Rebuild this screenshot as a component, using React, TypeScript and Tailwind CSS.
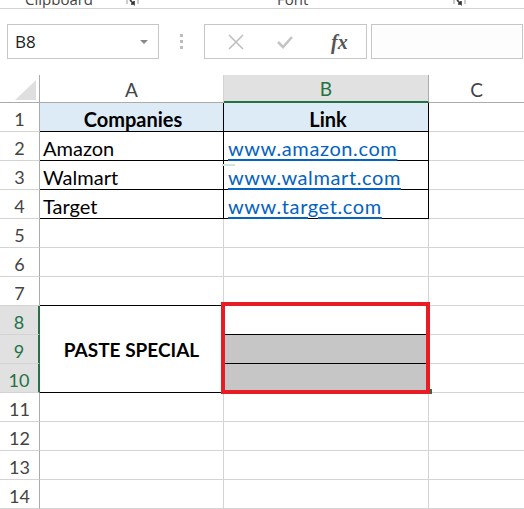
import React from "react";

const grid = "border-[#d4d4d4]";

type Row = { n: number; a?: React.ReactNode; b?: React.ReactNode };

const rows: Row[] = [
  { n: 1 },
  { n: 2, a: "Amazon", b: "www.amazon.com" },
  { n: 3, a: "Walmart", b: "www.walmart.com" },
  { n: 4, a: "Target", b: "www.target.com" },
  { n: 5 },
  { n: 6 },
  { n: 7 },
  { n: 8 },
  { n: 9 },
  { n: 10 },
  { n: 11 },
  { n: 12 },
  { n: 13 },
  { n: 14 },
];

function Launcher() {
  return (
    <svg width="14" height="8" viewBox="0 0 14 8" className="block">
      <path d="M1 0 L1 4" stroke="#9a9a9a" strokeWidth="1" />
      <path d="M4 0 L8 4 L8 1 M8 4 L5 4" stroke="#333" strokeWidth="1.6" fill="none" />
      <path d="M12 0 L12 4" stroke="#9a9a9a" strokeWidth="1" />
    </svg>
  );
}

export default function App() {
  return (
    <div className="w-[524px] h-[509px] overflow-hidden bg-white" style={{ fontFamily: "Lato, 'Open Sans', sans-serif" }}>
      {/* ribbon group labels, cut off at the top */}
      <div className="h-[9px] border-b border-[#d4d4d4] flex items-end overflow-hidden relative">
        <span className="absolute left-[25px] top-[-12px] text-[15px] text-[#444]" style={{ fontFamily: "'Open Sans', sans-serif" }}>Clipboard</span>
        <span className="absolute left-[126px] top-0"><Launcher /></span>
        <span className="absolute left-[277px] top-[-12px] text-[15px] text-[#444]" style={{ fontFamily: "'Open Sans', sans-serif" }}>Font</span>
        <span className="absolute left-[453px] top-0"><Launcher /></span>
      </div>

      {/* formula bar */}
      <div className="flex items-center mt-[15px] h-[35px]">
        <div className="ml-[7px] w-[152px] h-[35px] border border-[#c6c6c6] flex items-center justify-between pl-[7px] pr-[10px]">
          <span className="text-[17px] text-[#222] pt-[1px]" style={{ fontFamily: "'Open Sans', sans-serif" }}>B8</span>
          <svg width="8" height="4" viewBox="0 0 8 4"><path d="M0 0 L8 0 L4 4 Z" fill="#888" /></svg>
        </div>
        <div className="w-[45px] flex flex-col items-center gap-[3px]">
          <span className="w-[3px] h-[3px] bg-[#bdbdbd]" />
          <span className="w-[3px] h-[3px] bg-[#bdbdbd]" />
          <span className="w-[3px] h-[3px] bg-[#bdbdbd]" />
        </div>
        <div className="w-[163px] h-[35px] border border-[#c6c6c6] flex items-center">
          <svg width="18" height="16" viewBox="0 0 18 16" className="ml-[22px]">
            <path d="M2 1 L16 15 M16 1 L2 15" stroke="#bfbfbf" strokeWidth="1.6" />
          </svg>
          <svg width="16" height="14" viewBox="0 0 16 14" className="ml-[32px]">
            <path d="M1 7 L6 12 L15 2" stroke="#c4c4c4" strokeWidth="2.6" fill="none" />
          </svg>
          <span className="ml-[38px] text-[20px] italic font-bold text-[#555]" style={{ fontFamily: "'Liberation Serif', serif" }}>fx</span>
        </div>
        <div className="ml-[4px] w-[152px] h-[35px] border border-[#c6c6c6] bg-[#fdfdfd]" />
      </div>

      {/* sheet */}
      <div className="relative mt-[16px] grid grid-cols-[40px_184px_205px_95px] grid-rows-[28px_repeat(14,29px)] text-[20px]">
        {/* header row */}
        <div className="border-r border-b border-[#ababab] relative">
          <svg width="22" height="20" viewBox="0 0 22 20" className="absolute left-[15px] top-[5px]">
            <path d="M21 0 L21 20 L0 20 Z" fill="#dfdfdf" />
          </svg>
        </div>
        <div className={`border-r ${grid} border-b-[#ababab] border-b flex items-center justify-center pt-[3px] text-[19px] text-[#444]`}>A</div>
        <div className="border-r border-r-[#ababab] border-b-2 border-b-[#217346] bg-[#e1e1e1] flex items-center justify-center pt-[3px] text-[19px] text-[#217346]">B</div>
        <div className="border-b border-[#ababab] flex items-center justify-center pt-[3px] text-[19px] text-[#444]">C</div>

        {rows.map((r) => {
          const sel = r.n >= 8 && r.n <= 10;
          const head = r.n === 1;
          const table = r.n <= 4;
          return (
            <React.Fragment key={r.n}>
              <div
                className={`flex items-center justify-center pt-[4px] text-[18px] border-b ${grid} ${
                  sel ? "bg-[#e1e1e1] text-[#217346] border-r-2 border-r-[#217346]" : "border-r border-r-[#ababab] text-[#444]"
                }`}
              >
                {r.n}
              </div>
              {r.n === 8 && (
                <div className="row-span-3 border-b border-r border-black flex items-center justify-center pt-[2px] font-bold text-[19px] text-[#000]">
                  PASTE SPECIAL
                </div>
              )}
              {!sel && (
                <div
                  className={`border-r border-b flex items-center pl-[3px] pt-[3px] ${
                    head ? "bg-[#ddebf7] justify-center font-bold" : ""
                  } ${table || r.n === 7 ? "border-b-black" : grid} ${table ? "border-r-black" : "border-r-[#d4d4d4]"}`}
                >
                  {head ? "Companies" : r.a}
                </div>
              )}
              <div
                className={`border-r border-b flex items-center pl-[4px] pt-[3px] ${
                  head ? "bg-[#ddebf7] justify-center font-bold" : ""
                } ${r.n === 9 || r.n === 10 ? "bg-[#c6c6c6]" : ""} ${
                  table || sel || r.n === 7 ? "border-b-black" : grid
                } ${table ? "border-r-black" : "border-r-[#d4d4d4]"}`}
              >
                {head ? (
                  "Link"
                ) : r.b ? (
                  <span className="text-[#0563c1] underline underline-offset-[3px] tracking-[0.6px]">{r.b}</span>
                ) : null}
              </div>
              <div className={`border-b ${grid}`} />
            </React.Fragment>
          );
        })}

        {/* faint copy marker */}
        <div className="absolute left-[222px] top-[89px] w-[13px] h-[2px] bg-[#cfe6d8]" />
        {/* selection outline */}
        <div className="absolute left-[221px] top-[227px] w-[209px] h-[92px] border-[4px] border-[#e81c24]" />
        <div className="absolute left-[430px] top-[314px] w-[2px] h-[5px] bg-[#217346]" />
      </div>
    </div>
  );
}
